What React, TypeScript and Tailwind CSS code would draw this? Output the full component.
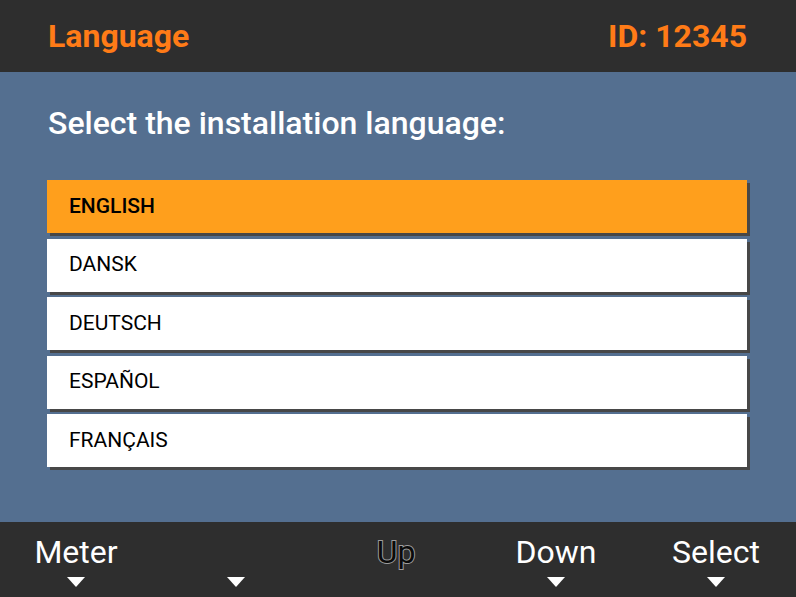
import { useState } from 'react'

const LANGUAGES = ['ENGLISH', 'DANSK', 'DEUTSCH', 'ESPAÑOL', 'FRANÇAIS']

const SOFT_KEYS = [
  { label: 'Meter', arrow: true, disabled: false },
  { label: '', arrow: true, disabled: false },
  { label: 'Up', arrow: false, disabled: true },
  { label: 'Down', arrow: true, disabled: false },
  { label: 'Select', arrow: true, disabled: false },
]

function Arrow() {
  return (
    <svg width="18" height="10" viewBox="0 0 18 10" className="block">
      <polygon points="0,0 18,0 9,10" fill="#ffffff" />
    </svg>
  )
}

export default function App() {
  const [selected, setSelected] = useState(0)

  return (
    <div className="flex h-[597px] w-[796px] flex-col overflow-hidden font-['Roboto',sans-serif]">
      <header className="flex h-[72px] shrink-0 items-center justify-between bg-[#2e2e2e] pl-12 pr-[49px] text-[32px] font-bold text-[#ff7b17]">
        <span>Language</span>
        <span>ID: 12345</span>
      </header>

      <main className="flex flex-1 flex-col bg-[#546f90] pl-[47px] pr-[49px] pt-[28px]">
        <h1 className="pl-px text-[32px] font-medium leading-[46px] text-white">
          Select the installation language:
        </h1>
        <ul className="mt-[34px] flex flex-col gap-[5.5px]">
          {LANGUAGES.map((lang, i) => (
            <li
              key={lang}
              onClick={() => setSelected(i)}
              className={
                'flex h-[53px] items-center pl-[22px] text-[21px] text-black shadow-[3px_3px_0_#474747] ' +
                (i === selected ? 'bg-[#ff9f1c] font-medium' : 'bg-white')
              }
            >
              {lang}
            </li>
          ))}
        </ul>
      </main>

      <footer className="flex h-[75px] shrink-0 justify-center bg-[#2e2e2e] pr-1">
        {SOFT_KEYS.map((key, i) => (
          <div key={i} className="flex w-[160px] shrink-0 flex-col items-center">
            <span
              className={
                'h-[43px] pt-[10px] text-[32px] leading-[40px] ' +
                (key.disabled
                  ? 'text-[#0a0a0a] [-webkit-text-stroke:2px_#9c9c9c] [paint-order:stroke_fill]'
                  : 'text-white')
              }
            >
              {key.label}
            </span>
            <div className="mt-[12px] h-[10px]">{key.arrow && <Arrow />}</div>
          </div>
        ))}
      </footer>
    </div>
  )
}
